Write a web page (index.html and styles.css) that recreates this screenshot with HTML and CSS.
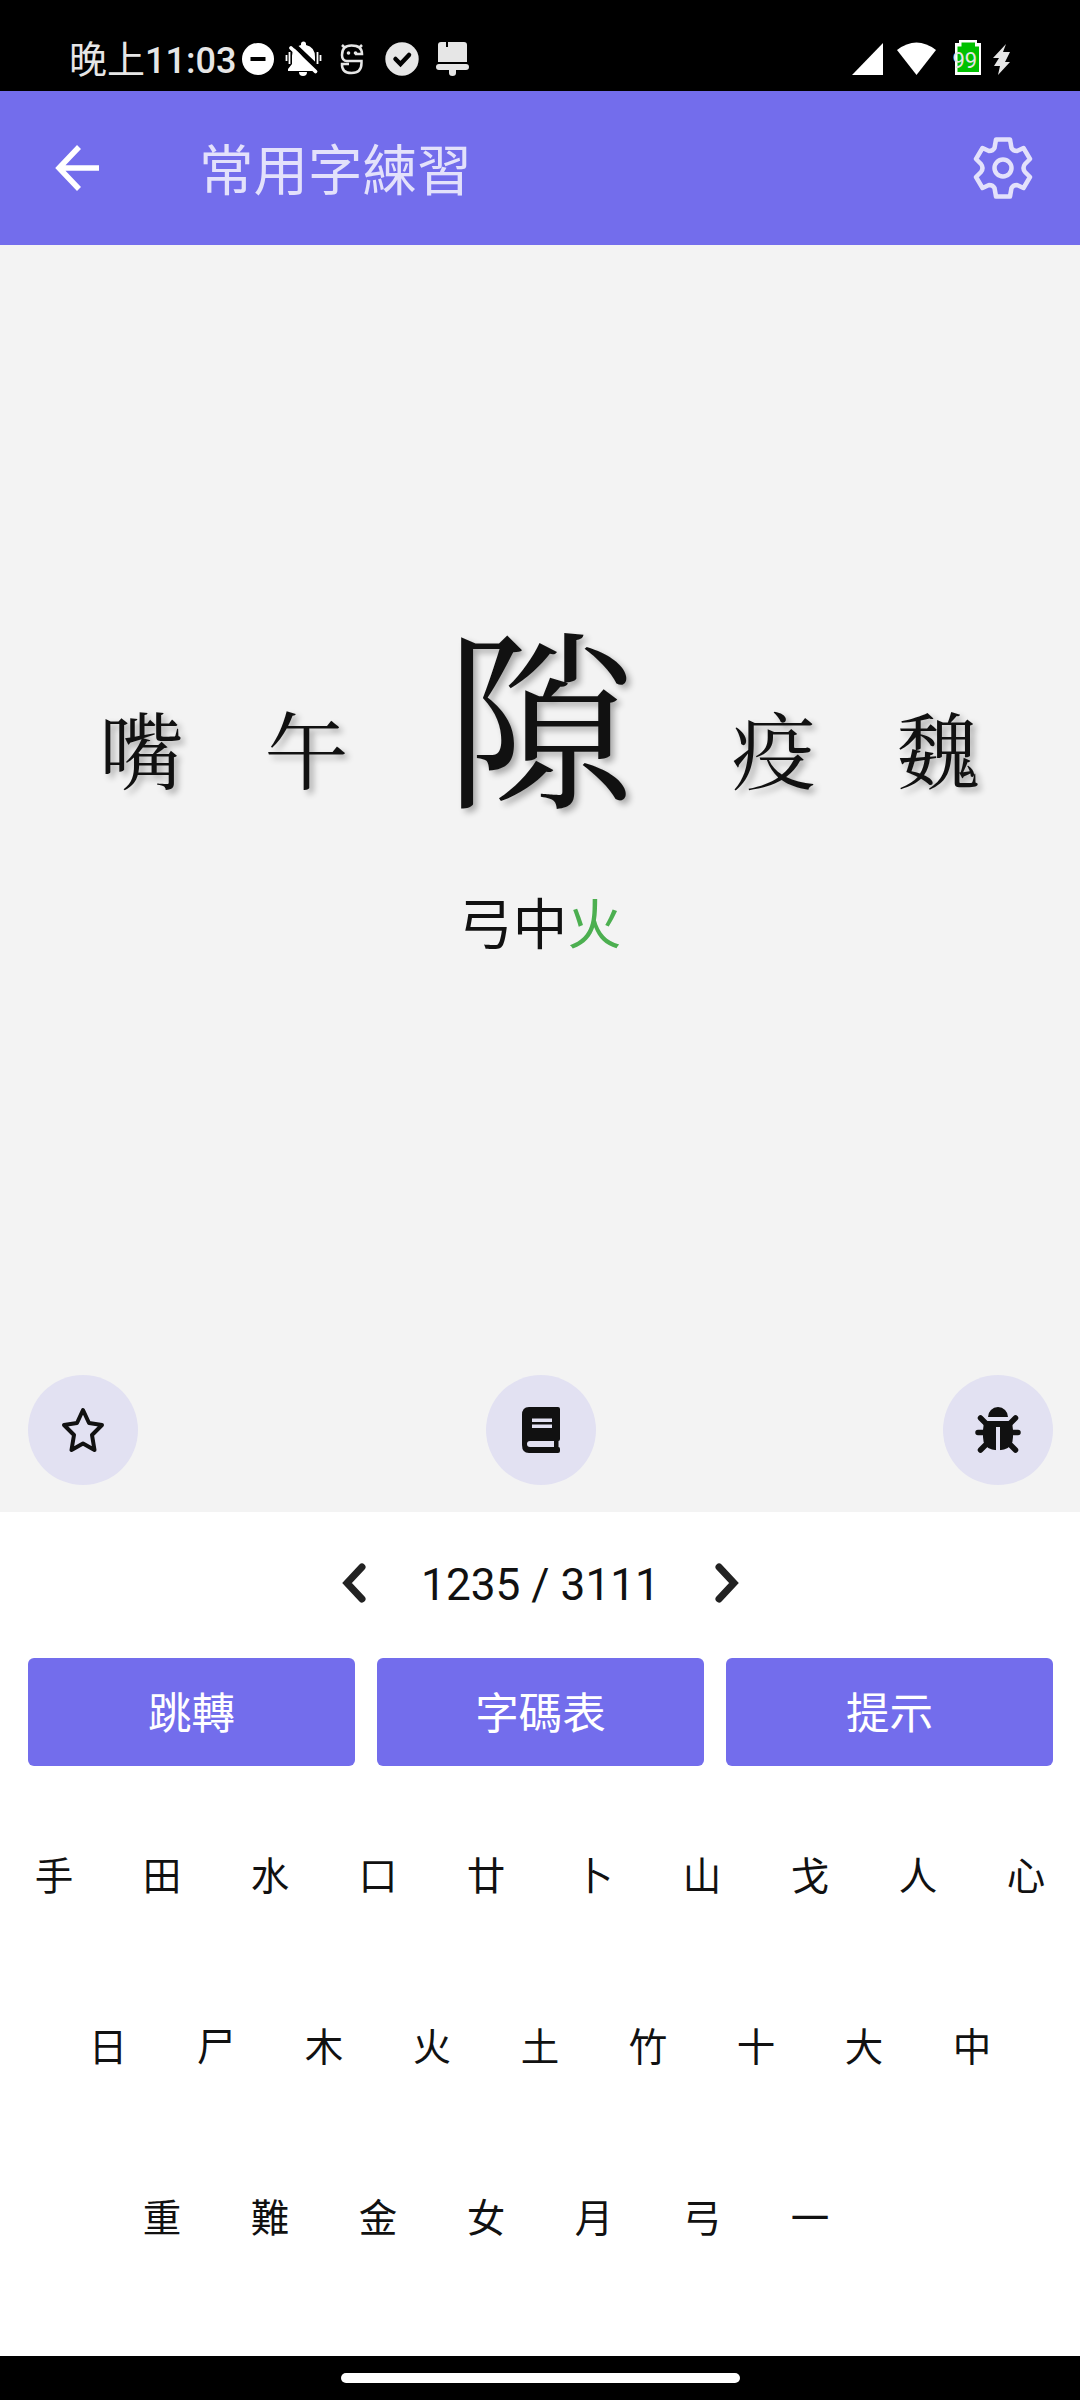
FILE: index.html
```html
<!DOCTYPE html>
<html lang="zh-Hant">
<head>
<meta charset="utf-8">
<title>常用字練習</title>
<link rel="stylesheet" href="styles.css">
</head>
<body>
<div class="status">
  <span class="clock"><span class="clock-cjk">晚上</span>11:03</span>
  <svg class="status-left" width="240" height="60" viewBox="235 30 240 60" fill="#e6e6e6">
    <circle cx="258" cy="59" r="16" fill="#fff"/><path d="M250.500 57h15v4h-15z" fill="#000"/>
    <path d="M288 71v-2l4-5V56q0-9 9-11v-1a2.500 2.500 0 0 1 5 0v1q9 2 9 12v7l3 5v2z" fill="#fff"/>
    <path d="M299 72h8a4 4 0 0 1-8 0z" fill="#fff"/>
    <path d="M291 42l29 27.500V74h-4" stroke="#000" stroke-width="4.500" fill="#000"/>
    <path d="M291 48l24.500 23.500" stroke="#fff" stroke-width="3.800" stroke-linecap="round"/>
    <path d="M289.500 52v12M286.500 55v6M317.500 52v12M320.500 55v6" stroke="#fff" stroke-width="1.800"/>
    <path d="M355 54h7C362 48 358 45.500 351.500 45.500S342 49 342 55Q342 61 347 61H361.500V63Q361.500 73 351.500 73T342 64h7M344 47l-2-2M360 47l2-2" fill="none" stroke="#e6e6e6" stroke-width="2.500"/>
    <circle cx="348.500" cy="53" r="1.800"/><circle cx="355.500" cy="53" r="1.800"/>
    <circle cx="402" cy="59" r="16.700"/><path d="M395.500 59l5 5 8.500-9" fill="none" stroke="#000" stroke-width="4.500" stroke-linecap="round"/>
    <path d="M438 62V45q0-3 3-3h5v5h2v-5h16q3 0 3 3v17zM439 64h27q3 0 3 3t-3 3h-10v3q0 3-3.500 3t-3.500-3v-3h-10q-3 0-3-3t3-3z"/>
  </svg>
  <svg class="status-right" width="180" height="60" viewBox="840 30 180 60" fill="#fff">
    <path d="M883 43v32h-31z"/><path d="M897 50q19.500-15 39 0l-19.500 25z"/>
    <path d="M955 43h4v-3h18v3h4v32h-26z"/><path d="M957.500 46.500h4v-4h13.500v4h4v25.500h-21.500z" fill="#00c000"/>
    <text class="battery-text" x="952.500" y="68">99</text>
    <path d="M1006 44l-13 14h6l-5 8h6l-2 9 12-13h-5l5-10h-7z" fill="#e6e6e6"/>
  </svg>
</div>
<header class="appbar">
  <svg class="back" width="45" height="46" viewBox="0 0 45 46" fill="none" stroke="#fff" stroke-width="5.500"><path d="M24 2L4 23l20 21M3 23h41"/></svg>
  <h1 class="title">常用字練習</h1>
  <svg class="gear" width="60" height="64" viewBox="-30 -32 60 64" fill="none" stroke="#e3e1fb" stroke-width="4.500" stroke-linejoin="round"><circle r="8.500"/><path d="M-7-28.500H7L8.500-20Q10-17 14-17L20.500-20L27-9L22-4Q19 0 22 4L27 9L20.500 20L14 17Q10 17 8.500 20L7 28.500H-7L-8.500 20Q-10 17-14 17L-20.500 20L-27 9L-22 4Q-19 0-22-4L-27-9L-20.500-20L-14-17Q-10-17-8.500-20Z"/></svg>
</header>
<main class="practice">
  <div class="chars"><span>嘴</span><span>午</span><span class="current">隙</span><span>疫</span><span>魏</span></div>
  <div class="code">弓中<span class="pending">火</span></div>
  <div class="tools">
    <button class="tool"><svg width="46" height="46" viewBox="0 0 46 46" fill="none" stroke="#111" stroke-width="4" stroke-linejoin="round"><path d="M23 3l6 13 13 2-10 10 2.500 15L23 36.500 11.500 43 14 28 4 18l13-2z"/></svg></button>
    <button class="tool"><svg width="40" height="46" viewBox="0 0 40 46"><path fill="#111" fill-rule="evenodd" d="M8 0H37q2 0 2 2V32q0 2-1.500 2v6q1.500 0 1.500 2v2q0 2-2 2H8q-7 0-7-8V8q0-8 7-8zM11 11.500v3.500h20v-3.500zM11 17.500v3.500h20v-3.500zM9 34q-3 0-3 3t3 3h24v-6z"/></svg></button>
    <button class="tool"><svg width="46" height="46" viewBox="0 0 46 46"><path fill="#111" d="M13 10a10 10 0 0 1 20 0z"/><path d="M5.500 11l7 7M40.500 11l-7 7M3 25.500h40M5.500 43l8-8M40.500 43l-8-8" stroke="#111" stroke-width="5.500" stroke-linecap="round"/><path fill="#111" d="M10 14h26q2 4 2 9v7q0 10-9 12.500-6 1.500-12 0Q8 40 8 30v-7q0-5 2-9z"/><path fill="#e2e1f2" d="M21 20h4v24h-4z"/></svg></button>
  </div>
</main>
<section class="panel">
  <nav class="pager">
    <svg width="26" height="40" viewBox="0 0 26 40"><path d="M21 4L6 20l15 16"/></svg>
    <span class="count">1235 / 3111</span>
    <svg width="26" height="40" viewBox="0 0 26 40"><path d="M5 4l15 16L5 36"/></svg>
  </nav>
  <div class="actions"><button>跳轉</button><button>字碼表</button><button>提示</button></div>
  <div class="keyboard">
    <div class="keys"><span>手</span><span>田</span><span>水</span><span>口</span><span>廿</span><span>卜</span><span>山</span><span>戈</span><span>人</span><span>心</span></div>
    <div class="keys"><span>日</span><span>尸</span><span>木</span><span>火</span><span>土</span><span>竹</span><span>十</span><span>大</span><span>中</span></div>
    <div class="keys third"><span>重</span><span>難</span><span>金</span><span>女</span><span>月</span><span>弓</span><span>一</span></div>
  </div>
</section>
<footer class="homebar"><div class="handle"></div></footer>
</body>
</html>
```
FILE: styles.css
```css
* { box-sizing: border-box; }
body { margin: 0; width: 1080px; height: 2400px; display: flex; flex-direction: column; background: #fff; color: #111; font-family: Roboto, "Noto Sans CJK TC", sans-serif; overflow: hidden; }
svg { display: block; flex: none; }
button { border: 0; padding: 0; font: inherit; color: inherit; }
.status { height: 91px; background: #000; display: flex; align-items: flex-start; padding: 30px 60px 0 69px; }
.clock { width: 166px; flex: none; height: 60px; line-height: 60px; font-size: 36px; font-weight: 500; color: #e6e6e6; white-space: nowrap; }
.clock-cjk { font-size: 38px; font-weight: 400; }
.status-right { margin-left: auto; }
.battery-text { font: 400 22px Roboto, sans-serif; fill: #e6e6e6; }
.appbar { height: 154px; background: #736dec; display: flex; align-items: center; padding: 0 47px 0 55px; }
.title { margin: 0 0 0 99px; padding-top: 6px; font-size: 54.5px; font-weight: 400; line-height: 80px; color: #e3e1fb; }
.gear { margin-left: auto; }
.practice { height: 1267px; background: #f3f3f3; display: flex; flex-direction: column; padding-top: 345px; }
.chars { height: 240px; display: flex; justify-content: center; align-items: flex-end; font-family: "Noto Serif CJK TC", "Noto Sans CJK TC", serif; font-size: 84px; line-height: 120px; text-shadow: 4px 4px 6px rgba(0, 0, 0, .3); gap: 81px; }
.chars span { margin-bottom: 23px; }
.chars .current { font-size: 192px; line-height: 240px; margin: 0 15px 0 14px; }
.code { height: 80px; line-height: 80px; margin-top: 55px; text-align: center; font-size: 54.5px; }
.pending { color: #4caf50; }
.tools { margin: auto 27px 27px 28px; display: flex; justify-content: space-between; }
.tool { width: 110px; height: 110px; border-radius: 50%; background: #e2e1f2; display: flex; align-items: center; justify-content: center; }
.panel { height: 844px; padding: 0 27px 0 28px; }
.pager { height: 146px; display: flex; align-items: center; justify-content: center; gap: 54.5px; }
.pager svg { margin-bottom: 4px; }
.pager path { fill: none; stroke: #222; stroke-width: 7; stroke-linecap: round; }
.count { font-size: 44.2px; line-height: 60px; }
.actions { height: 108px; display: grid; grid-template-columns: repeat(3, 1fr); gap: 22px; }
.actions button { background: #736dec; color: #fff; border-radius: 6px; font-size: 43.5px; padding-bottom: 4px; }
.keyboard { margin: 21px -27px 0 -28px; font-size: 38.5px; }
.keys { height: 171px; display: flex; align-items: center; justify-content: center; }
.keys span { width: 108px; text-align: center; }
.third { padding-right: 108px; }
.homebar { height: 44px; background: #000; display: flex; align-items: center; justify-content: center; }
.handle { width: 399px; height: 10px; border-radius: 5px; background: #fff; }
```
